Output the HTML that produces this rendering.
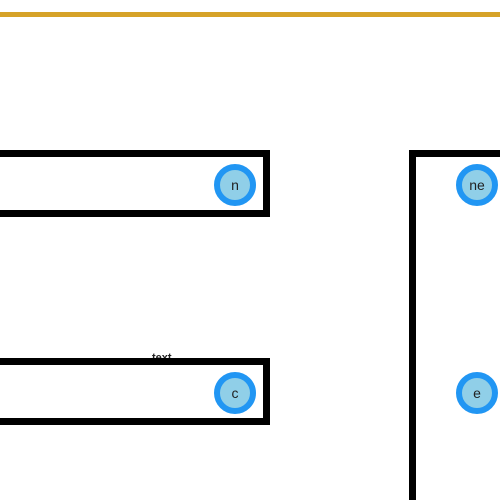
<html style="overflow:hidden"><body style="margin:0;width:500px;height:500px;background:#fff;position:relative;overflow:hidden;font-family:'Liberation Sans',sans-serif">
<style>div{box-sizing:border-box}</style>
<div style="position:absolute;left:0;top:12px;width:500px;height:5px;background:#d6a228"></div>
<div style="position:absolute;left:152px;top:352px;font-size:11px;font-weight:bold;color:#222">text</div>
<div style="position:absolute;left:-20px;top:150px;width:290px;height:67px;border:7px solid #000;background:#fff"></div>
<div style="position:absolute;left:-20px;top:358px;width:290px;height:67px;border:7px solid #000;background:#fff"></div>
<div style="position:absolute;left:409px;top:150px;width:91px;height:350px;border:7px solid #000;border-right:0;border-bottom:0;background:#fff"></div>
<svg width="500" height="500" style="position:absolute;left:0;top:0">
<g font-family="Liberation Sans" font-size="14" text-anchor="middle" fill="#222">
<circle cx="235" cy="185" r="18" fill="#90cfe8" stroke="#2196f3" stroke-width="6"/><text x="235" y="190">n</text>
<circle cx="235" cy="393" r="18" fill="#90cfe8" stroke="#2196f3" stroke-width="6"/><text x="235" y="398">c</text>
<circle cx="477" cy="185" r="18" fill="#90cfe8" stroke="#2196f3" stroke-width="6"/><text x="477" y="190">ne</text>
<circle cx="477" cy="393" r="18" fill="#90cfe8" stroke="#2196f3" stroke-width="6"/><text x="477" y="398">e</text>
</g></svg>
</body></html>
